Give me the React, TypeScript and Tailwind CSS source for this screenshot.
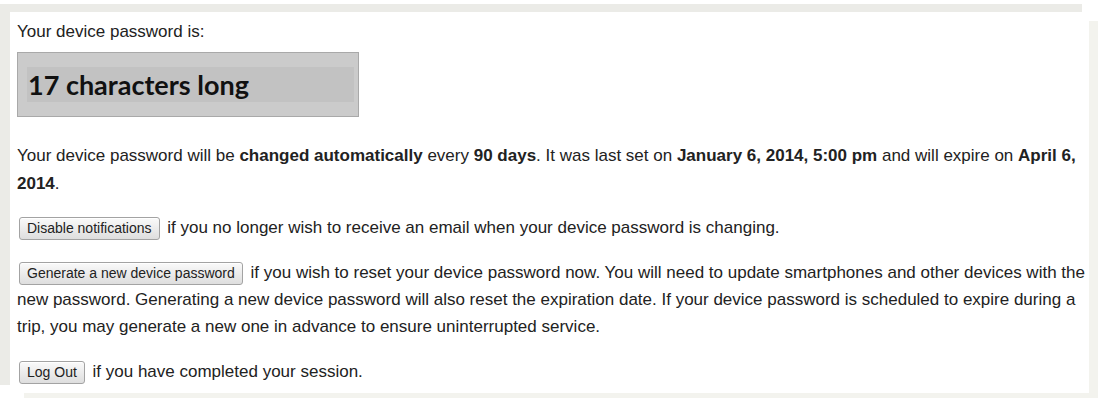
function PageButton({ label }: { label: string }) {
  return (
    <button className="ml-[2px] mr-[3px] inline-block h-[23px] rounded-[3px] border border-[#a3a3a3] bg-gradient-to-b from-[#fafafa] to-[#dedede] px-[7px] align-middle font-['Liberation_Sans',Arial,sans-serif] text-[14px] leading-[21px] text-[#222] shadow-[inset_0_1px_0_#fff]">
      {label}
    </button>
  );
}

export default function App() {
  return (
    <div className="relative h-[402px] w-[1103px] overflow-hidden bg-white font-['Liberation_Sans',Arial,sans-serif] text-[17px] text-[#222]">
      {/* screenshot frame edges */}
      <div className="pointer-events-none absolute left-[24px] top-[21px] h-[377px] w-[1074px] border-r-[9px] border-b-[5px] border-[#f3f3ee]" />
      <div className="pointer-events-none absolute left-0 top-[4px] h-[381px] w-[1082px] border-l-[10px] border-t-[8px] border-[#ebebe7]" />

      <div className="relative pl-[17px] pr-[15px] pt-[20px]">
        <p className="leading-[24px]">Your device password is:</p>

        <div className="mt-[8px] h-[65px] w-[342px] border border-[#a9a9a9] bg-[#cbcbcb] pl-[9px] pt-[14px]">
          <div className="h-[35px] w-[327px] bg-[#c2c2c2] pl-[1px] font-['Lato',sans-serif] text-[27px] font-bold leading-[35px] text-[#111]">
            17 characters long
          </div>
        </div>

        <p className="mt-[25px] leading-[28px]">
          Your device password will be <b>changed automatically</b> every <b>90 days</b>. It was last set on{" "}
          <b>January 6, 2014, 5:00 pm</b> and will expire on <b>April 6, 2014</b>.
        </p>

        <p className="mt-[16px] leading-[28px]">
          <PageButton label="Disable notifications" /> if you no longer wish to receive an email when your device
          password is changing.
        </p>

        <p className="mt-[17px] leading-[27px]">
          <PageButton label="Generate a new device password" /> if you wish to reset your device password now. You
          will need to update smartphones and other devices with the new password. Generating a new device password
          will also reset the expiration date. If your device password is scheduled to expire during a trip, you may
          generate a new one in advance to ensure uninterrupted service.
        </p>

        <p className="mt-[18px] leading-[28px]">
          <PageButton label="Log Out" /> if you have completed your session.
        </p>
      </div>
    </div>
  );
}
